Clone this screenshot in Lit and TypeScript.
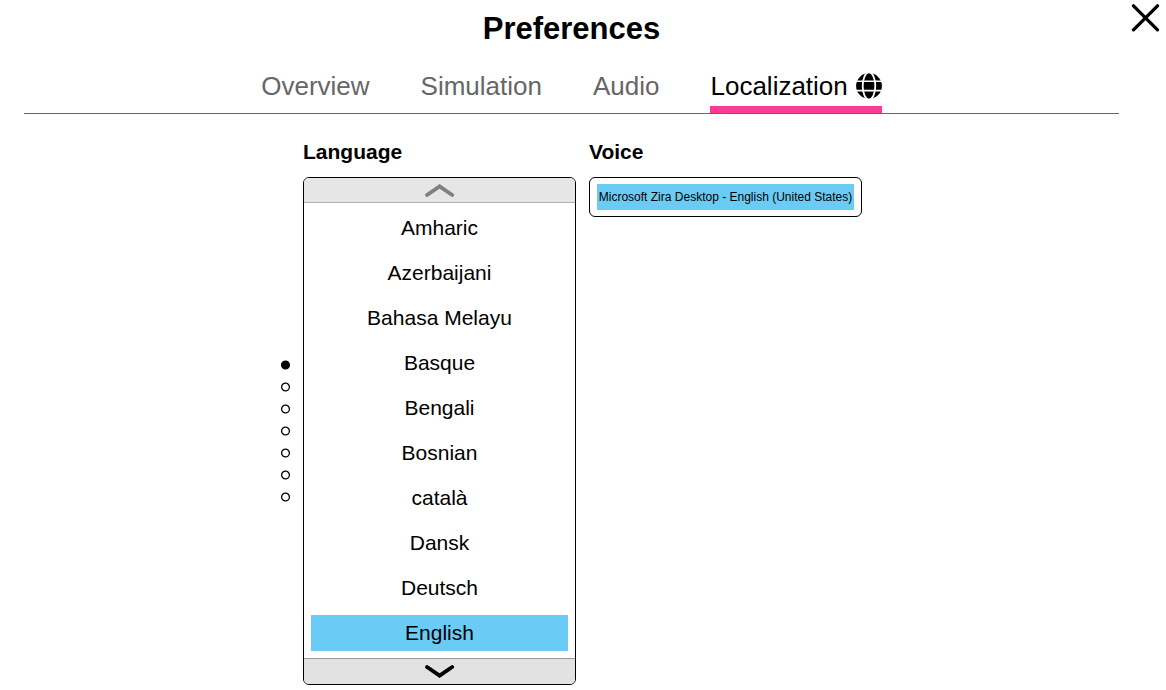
import { LitElement, html, css, svg } from "lit";
import { customElement, state } from "lit/decorators.js";
import { classMap } from "lit/directives/class-map.js";

const TABS = ["Overview", "Simulation", "Audio", "Localization"];
const LANGUAGES = [
  "Amharic",
  "Azerbaijani",
  "Bahasa Melayu",
  "Basque",
  "Bengali",
  "Bosnian",
  "català",
  "Dansk",
  "Deutsch",
  "English",
];
const VOICES = ["Microsoft Zira Desktop - English (United States)"];
const PAGE_COUNT = 7;

const globe = html`<svg class="globe" viewBox="0 0 26 26" aria-hidden="true">
  <circle cx="13" cy="13" r="12.9" fill="#000" />
  ${svg`<g fill="none" stroke="#fff" stroke-width="1.8">
    <path d="M0 8.2H26M0 17.6H26" stroke-width="1.6" />
    <ellipse cx="13" cy="13" rx="6.3" ry="13.6" />
  </g>`}
</svg>`;

@customElement("app-root")
export class AppRoot extends LitElement {
  @state() private tab = "Localization";
  @state() private language = "English";
  @state() private voice = VOICES[0];
  @state() private page = 0;

  static styles = css`
    :host {
      display: flex;
      align-items: flex-start;
      min-height: 100vh;
      box-sizing: border-box;
      background: #fff;
      color: #000;
      font-family: "Liberation Sans", Arial, sans-serif;
    }
    button {
      appearance: none;
      margin: 0;
      padding: 0;
      border: 0;
      background: none;
      color: inherit;
      font: inherit;
      cursor: pointer;
    }
    svg {
      display: block;
    }
    .dialog {
      flex: 1;
      min-width: 0;
      padding: 11px 0 0 24px;
    }
    .title {
      margin: 0;
      font-size: 31px;
      line-height: 36px;
      text-align: center;
    }
    .tabs {
      display: flex;
      justify-content: center;
      gap: 51px;
      padding-top: 19px;
      border-bottom: 1px solid #666;
    }
    .tab {
      display: flex;
      align-items: center;
      gap: 8px;
      height: 47px;
      padding-bottom: 7px;
      box-sizing: border-box;
      color: #666;
      font-size: 26px;
      line-height: 40px;
    }
    .tab.selected {
      padding-bottom: 0;
      border-bottom: 7px solid #fb3b93;
      color: #000;
    }
    .globe {
      width: 26px;
      height: 26px;
    }
    .content {
      display: grid;
      grid-template-columns: 9px 273px 273px;
      justify-content: center;
      align-items: start;
      column-gap: 13px;
      row-gap: 13px;
      padding-top: 26px;
    }
    .heading {
      margin: 0;
      font-size: 21px;
      line-height: 24px;
    }
    .heading.language {
      grid-column: 2;
    }
    .dots {
      display: grid;
      gap: 13px;
      align-self: center;
    }
    .dot {
      display: block;
      width: 9px;
      height: 9px;
    }
    .dot svg {
      width: 9px;
      height: 9px;
      overflow: visible;
    }
    .dot circle {
      fill: #fff;
      stroke: #000;
      stroke-width: 1.3;
    }
    .dot.current circle {
      fill: #000;
    }
    .panel {
      overflow: hidden;
      border: 1px solid #000;
      border-radius: 6px;
    }
    .scroll {
      display: flex;
      justify-content: center;
      align-items: center;
      width: 100%;
      height: 25px;
      box-sizing: border-box;
      background: #e2e2e2;
    }
    .up {
      border-bottom: 1px solid #b0b0b0;
      background: #e6e6e6;
      color: #808080;
    }
    .down {
      height: 26px;
      border-top: 1px solid #999;
    }
    .chevron {
      width: 32px;
      height: 16px;
    }
    .options {
      display: grid;
      gap: 9px;
      padding: 7px;
    }
    .options.voices {
      padding: 6px 7px;
    }
    .option {
      height: 36px;
      font-size: 21px;
      line-height: 36px;
      white-space: nowrap;
    }
    .voices .option {
      height: 26px;
      font-size: 12px;
      line-height: 26px;
    }
    .option.selected {
      background: #6accf5;
    }
    .close {
      flex: none;
      display: flex;
      justify-content: flex-end;
      width: 47px;
      padding: 3px 6px 3px 0;
    }
    .cross {
      width: 29px;
      height: 29px;
    }
  `;

  private chevron(d: string) {
    return html`<svg class="chevron" viewBox="0 0 32 16" aria-hidden="true">
      <path d=${d} fill="none" stroke="currentColor" stroke-width="3.9" stroke-linecap="round" />
    </svg>`;
  }

  private options(items: string[], value: string, pick: (v: string) => void) {
    return items.map(
      (item) => html`<button
        class=${classMap({ option: true, selected: item === value })}
        role="option"
        aria-selected=${item === value}
        @click=${() => pick(item)}
      >${item}</button>`
    );
  }

  private move(step: number) {
    this.page = Math.min(PAGE_COUNT - 1, Math.max(0, this.page + step));
  }

  render() {
    return html`
      <main class="dialog">
        <h1 class="title">Preferences</h1>
        <nav class="tabs" role="tablist">
          ${TABS.map(
            (name) => html`<button
              class=${classMap({ tab: true, selected: name === this.tab })}
              role="tab"
              aria-selected=${name === this.tab}
              @click=${() => (this.tab = name)}
            ><span>${name}</span>${name === "Localization" ? globe : null}</button>`
          )}
        </nav>
        <section class="content">
          <h2 class="heading language" id="language">Language</h2>
          <h2 class="heading" id="voice">Voice</h2>
          <div class="dots">
            ${Array.from(
              { length: PAGE_COUNT },
              (_, i) => html`<button
                class=${classMap({ dot: true, current: i === this.page })}
                aria-label="Page ${i + 1}"
                @click=${() => (this.page = i)}
              ><svg viewBox="0 0 9 9" aria-hidden="true"><circle cx="4.5" cy="4" r="3.9" /></svg></button>`
            )}
          </div>
          <div class="panel">
            <button class="scroll up" aria-label="Previous" @click=${() => this.move(-1)}>
              ${this.chevron("M3 13L15.6 4.4L28.2 13")}
            </button>
            <div class="options" role="listbox" aria-labelledby="language">
              ${this.options(LANGUAGES, this.language, (v) => (this.language = v))}
            </div>
            <button class="scroll down" aria-label="Next" @click=${() => this.move(1)}>
              ${this.chevron("M3 3L15.6 11.6L28.2 3")}
            </button>
          </div>
          <div class="panel">
            <div class="options voices" role="listbox" aria-labelledby="voice">
              ${this.options(VOICES, this.voice, (v) => (this.voice = v))}
            </div>
          </div>
        </section>
      </main>
      <button class="close" aria-label="Close">
        <svg class="cross" viewBox="0 0 29 29" aria-hidden="true">
          <path d="M2.5 2.8L26.5 26.8M26.5 2.8L2.5 26.8" fill="none" stroke="#000" stroke-width="3.3" stroke-linecap="round" />
        </svg>
      </button>
    `;
  }
}
